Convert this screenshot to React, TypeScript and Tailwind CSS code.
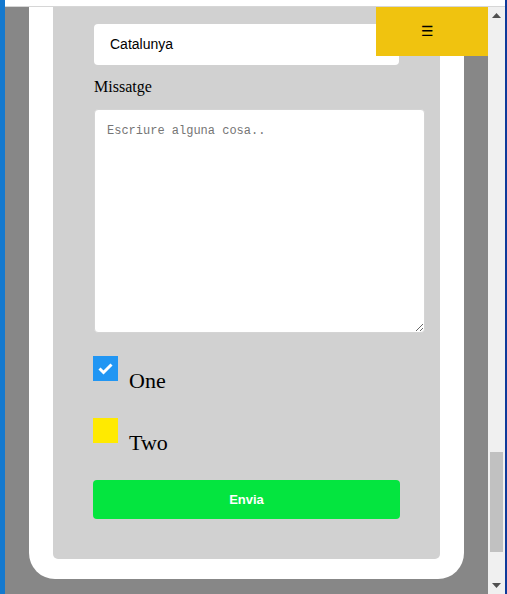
import { useState } from 'react';

export default function App() {
  const [one, setOne] = useState(true);
  const [two, setTwo] = useState(false);

  return (
    <div className="w-[507px] h-[594px] flex overflow-hidden bg-white">
      {/* desktop edge */}
      <div className="w-[5px] h-full bg-[#1479cf]" />

      <div className="w-[500px] h-full flex flex-col">
        {/* top strip */}
        <div className="h-[6px] bg-white" />
        <div className="h-px bg-[#d6d6d6]" />

        <div className="flex flex-1 min-h-0">
          {/* page */}
          <div className="relative w-[483px] h-full bg-[#878787] pl-[24px]">
            <div className="w-[435px] bg-white rounded-b-[26px] px-[24px] pb-[20px]">
              <div className="bg-[#d1d1d1] rounded-b-[5px] pt-[17px] pb-[40px] pl-[40px]">
                <div className="ml-px w-[305px] h-[41px] bg-white rounded-[4px] flex items-center pl-[16px] text-[14px] text-black font-['Liberation_Sans',Arial,sans-serif]">
                  Catalunya
                </div>

                <label className="block mt-[13px] ml-px text-[16px] leading-[18px] text-black font-['Liberation_Serif','Times_New_Roman',serif]">
                  Missatge
                </label>

                <textarea
                  placeholder="Escriure alguna cosa.."
                  className="block mt-[13px] ml-px w-[331px] h-[224px] bg-white border border-[#d4d4d4] rounded-[4px] p-[12px] text-[12px] text-black placeholder:text-[#757575] font-['Liberation_Mono','DejaVu_Sans_Mono',monospace] outline-none"
                />

                <div className="mt-[23px] flex flex-col gap-[24px] font-['Liberation_Serif','Times_New_Roman',serif]">
                  <label className="flex items-start cursor-pointer" onClick={() => setOne(!one)}>
                    <span className={`w-[25px] h-[25px] flex items-center justify-center ${one ? 'bg-[#2196f3]' : 'bg-[#eeeeee]'}`}>
                      {one && (
                        <svg width="25" height="25" viewBox="0 0 25 25">
                          <polyline points="6.5,12.5 10.5,16.5 18.5,8.5" fill="none" stroke="white" strokeWidth="3" />
                        </svg>
                      )}
                    </span>
                    <span className="ml-[11px] mt-[12px] text-[22px] leading-[26px] text-black">One</span>
                  </label>
                  <label className="flex items-start cursor-pointer" onClick={() => setTwo(!two)}>
                    <span className={`w-[25px] h-[25px] flex items-center justify-center ${two ? 'bg-[#2196f3]' : 'bg-[#ffea00]'}`}>
                      {two && (
                        <svg width="25" height="25" viewBox="0 0 25 25">
                          <polyline points="6.5,12.5 10.5,16.5 18.5,8.5" fill="none" stroke="white" strokeWidth="3" />
                        </svg>
                      )}
                    </span>
                    <span className="ml-[11px] mt-[12px] text-[22px] leading-[26px] text-black">Two</span>
                  </label>
                </div>

                <button className="mt-[24px] w-[307px] h-[39px] bg-[#04e53f] rounded-[4px] text-white text-[13px] font-bold font-['Liberation_Sans',Arial,sans-serif]">
                  Envia
                </button>
              </div>
            </div>

            {/* fixed menu toggle */}
            <div className="absolute top-0 left-[371px] w-[112px] h-[49px] bg-[#f0c30f] flex items-center pl-[45px] text-[14px] text-black font-['DejaVu_Sans',sans-serif]">
              ☰
            </div>
          </div>

          {/* scrollbar */}
          <div className="w-[17px] h-full bg-[#f0f0f0] flex flex-col items-center">
            <div className="h-[17px] flex items-center justify-center">
              <svg width="9" height="5" viewBox="0 0 9 5"><polygon points="0,5 4.5,0 9,5" fill="#505050" /></svg>
            </div>
            <div className="mt-[428px] w-[13px] h-[100px] bg-[#c1c1c1]" />
            <div className="mt-auto h-[17px] flex items-center justify-center">
              <svg width="9" height="5" viewBox="0 0 9 5"><polygon points="0,0 9,0 4.5,5" fill="#505050" /></svg>
            </div>
          </div>
        </div>
      </div>

      <div className="w-[2px] h-full bg-[#0e3a9a]" />
    </div>
  );
}
